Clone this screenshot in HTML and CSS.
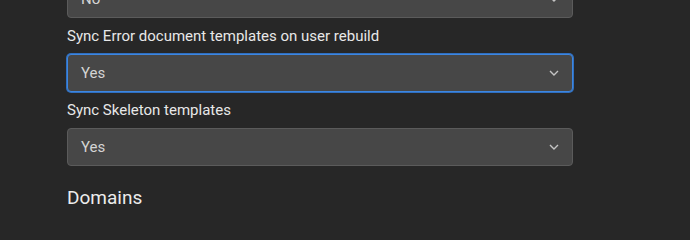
FILE: index.html
```html
<!DOCTYPE html>
<html>
<head>
<meta charset="utf-8">
<link rel="stylesheet" href="styles.css">
</head>
<body>
<div class="page">
  <div class="field first">
    <div class="select"><span>No</span><svg class="chev" viewBox="0 0 10 6" width="10" height="6"><path d="M1 1 L5 5 L9 1" fill="none" stroke="#c4c4c4" stroke-width="1.4"/></svg></div>
  </div>
  <div class="field">
    <div class="label">Sync Error document templates on user rebuild</div>
    <div class="select focus"><span>Yes</span><svg class="chev" viewBox="0 0 10 6" width="10" height="6"><path d="M1 1 L5 5 L9 1" fill="none" stroke="#c4c4c4" stroke-width="1.4"/></svg></div>
  </div>
  <div class="field">
    <div class="label">Sync Skeleton templates</div>
    <div class="select"><span>Yes</span><svg class="chev" viewBox="0 0 10 6" width="10" height="6"><path d="M1 1 L5 5 L9 1" fill="none" stroke="#c4c4c4" stroke-width="1.4"/></svg></div>
  </div>
  <h2 class="heading">Domains</h2>
</div>
</body>
</html>
```
FILE: styles.css
```css
html, body {
  margin: 0;
  padding: 0;
  background: #272727;
  width: 690px;
  height: 213px;
  overflow: hidden;
}
.page {
  padding: 0 117px 0 67px;
  font-family: Roboto, "Open Sans", sans-serif;
  color: #e4e4e4;
}
.field {
  display: flex;
  flex-direction: column;
}
.field.first {
  margin-top: -20px;
}
.label {
  font-size: 15px;
  line-height: 21px;
  margin-top: 8px;
  margin-bottom: 7px;
  color: #e8e8e8;
}
.select {
  box-sizing: border-box;
  height: 38px;
  border: 1px solid #5b5b5b;
  border-radius: 4px;
  background: #474747;
  display: flex;
  align-items: center;
  justify-content: space-between;
  padding: 0 13px 0 13px;
  font-size: 15px;
  color: #d4d4d4;
}
.select.focus {
  border-color: #3d86e0;
  box-shadow: 0 0 0 1px #2f6fc0;
}
.chev {
  display: block;
}
.heading {
  margin: 20px 0 0 0;
  font-size: 19px;
  line-height: 24px;
  font-weight: 400;
  color: #ececec;
}
```
